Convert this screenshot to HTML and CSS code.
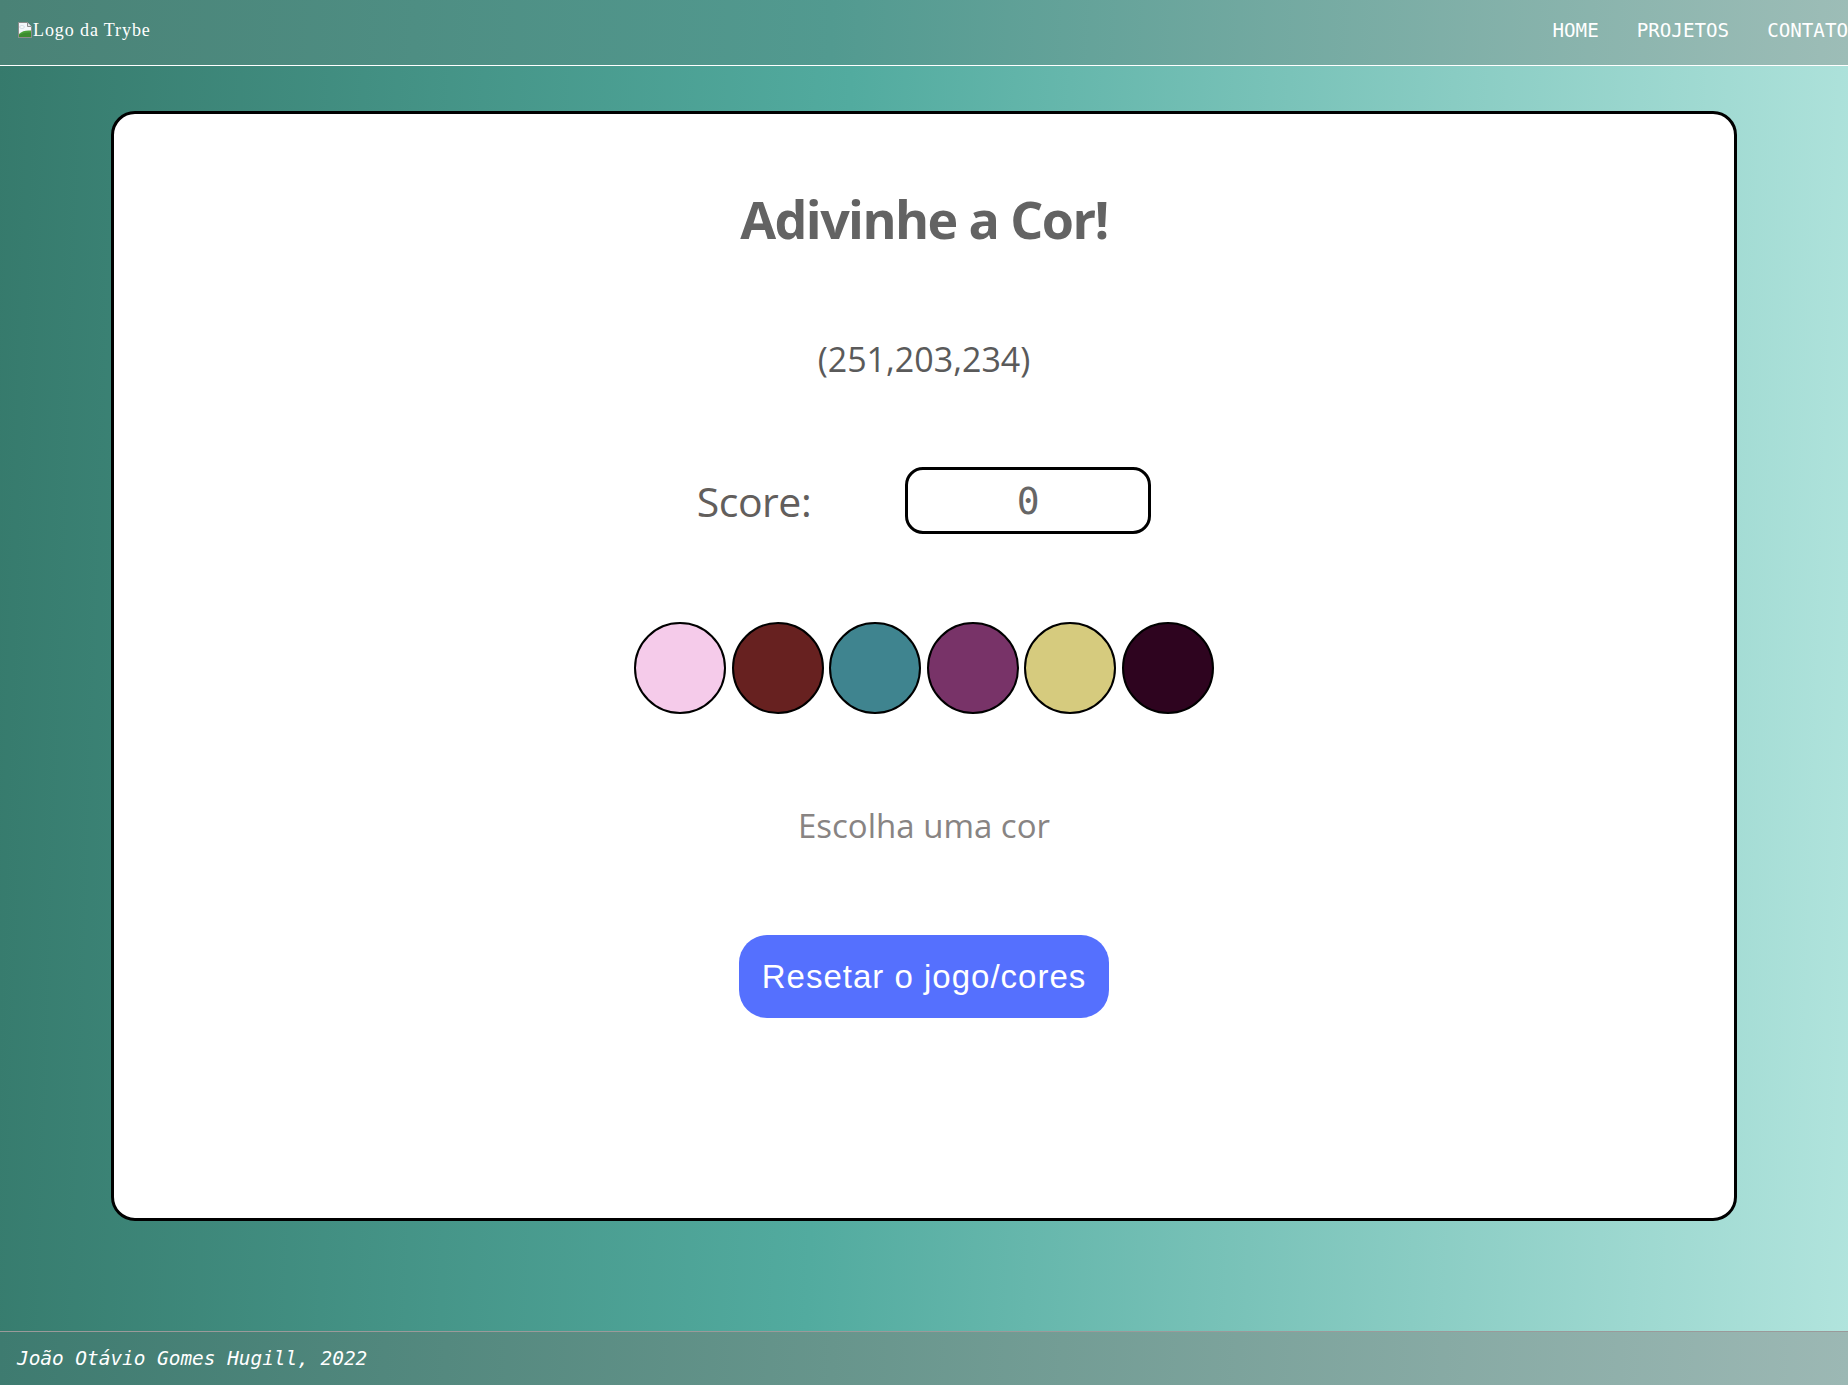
FILE: index.html
```html
<!DOCTYPE html>
<html lang="pt-BR">
<head>
<meta charset="utf-8">
<title>Adivinhe a Cor!</title>
<link rel="stylesheet" href="styles.css">
</head>
<body>
<header class="topbar">
  <div class="logo">
    <svg class="broken-img" width="16" height="16" viewBox="0 0 16 16">
      <path d="M1.5 0.5h9l4 4v11h-13z" fill="#f4f7fb" stroke="#8c8c8c"/>
      <path d="M10.5 0.5v4h4" fill="#dfe4ea" stroke="#8c8c8c"/>
      <ellipse cx="5" cy="5" rx="2.4" ry="1.4" fill="#ffffff" stroke="#b9c7d6" stroke-width="0.6"/>
      <path d="M2 15v-3c3-3 7-4 12-3.5v6.5z" fill="#4aa23a"/>
      <path d="M2 15v-1.6c3-2.3 7-3.2 12-2.8v4.4z" fill="#3d8c2f"/>
    </svg><span class="logo-text">Logo da Trybe</span>
  </div>
  <nav class="nav">
    <a class="nav-link" href="#">HOME</a>
    <a class="nav-link" href="#">PROJETOS</a>
    <a class="nav-link" href="#">CONTATO</a>
  </nav>
</header>
<main class="page">
  <section class="card">
    <h1 class="title">Adivinhe a Cor!</h1>
    <p class="rgb-color">(251,203,234)</p>
    <div class="score-row">
      <span class="score-label">Score:</span>
      <div class="score-box">0</div>
    </div>
    <div class="balls">
      <div class="ball" style="background-color: rgb(245, 203, 234)"></div>
      <div class="ball" style="background-color: rgb(103, 33, 32)"></div>
      <div class="ball" style="background-color: rgb(63, 132, 143)"></div>
      <div class="ball" style="background-color: rgb(120, 51, 104)"></div>
      <div class="ball" style="background-color: rgb(214, 203, 126)"></div>
      <div class="ball" style="background-color: rgb(46, 4, 31)"></div>
    </div>
    <p class="answer">Escolha uma cor</p>
    <button class="reset-btn" type="button">Resetar o jogo/cores</button>
  </section>
</main>
<footer class="footer">
  <span class="footer-text">João Otávio Gomes Hugill, 2022</span>
</footer>
</body>
</html>
```
FILE: styles.css
```css
* { box-sizing: border-box; }

html, body { margin: 0; padding: 0; }

body {
  min-height: 100vh;
  display: flex;
  flex-direction: column;
  background: linear-gradient(92deg, #367a6c 0%, #52ab9f 45%, #b1e4dd 100%);
  font-family: "Open Sans", "Noto Sans", sans-serif;
}

.topbar {
  height: 66px;
  padding: 0 0 5px 17px;
  display: flex;
  align-items: center;
  justify-content: space-between;
  background: linear-gradient(92deg, #4a8276 0%, #529a90 45%, #9dbdb7 100%);
  border-bottom: 1px solid #ffffff;
}

.logo {
  display: flex;
  align-items: center;
  color: #ffffff;
}

.broken-img { display: block; margin-top: -1px; }

.logo-text {
  font-family: "Liberation Serif", "Times New Roman", serif;
  font-size: 18px;
  letter-spacing: 0.9px;
}

.nav {
  display: flex;
  gap: 38px;
}

.nav-link {
  font-family: "DejaVu Sans Mono", monospace;
  font-size: 19.2px;
  color: #ffffff;
  text-decoration: none;
}

.page {
  flex: 1;
  padding-top: 45px;
}

.card {
  width: 1626px;
  height: 1110px;
  margin: 0 auto;
  background: #ffffff;
  border: 3px solid #000000;
  border-radius: 24px;
  display: flex;
  flex-direction: column;
  align-items: center;
  padding-top: 74px;
}

.title {
  margin: 0;
  font-size: 52px;
  line-height: 62px;
  font-weight: 700;
  color: #636363;
  letter-spacing: -1.6px;
}

.rgb-color {
  margin: 89px 0 0;
  font-size: 34px;
  line-height: 40px;
  color: #5a5a5a;
}

.score-row {
  margin-top: 88px;
  display: flex;
  align-items: center;
  gap: 94px;
}

.score-label {
  font-size: 41px;
  color: #625e5c;
  letter-spacing: -0.5px;
}

.score-box {
  width: 246px;
  height: 67px;
  border: 3px solid #000000;
  border-radius: 18px;
  display: flex;
  align-items: center;
  justify-content: center;
  font-family: "DejaVu Sans Mono", monospace;
  font-size: 38px;
  color: #666666;
}

.balls {
  margin-top: 88px;
  display: flex;
  gap: 5.5px;
}

.ball {
  width: 92px;
  height: 92px;
  border-radius: 50%;
  border: 2px solid #000000;
}

.answer {
  margin: 92px 0 0;
  font-size: 33px;
  line-height: 40px;
  color: #888483;
}

.reset-btn {
  margin-top: 89px;
  height: 83px;
  padding: 0 23px;
  border: none;
  border-radius: 28px;
  background: #5570fe;
  color: #ffffff;
  font-family: "Liberation Sans", Arial, sans-serif;
  font-size: 33px;
  letter-spacing: 1px;
}

.footer {
  height: 54px;
  border-top: 1px solid #9a9a9a;
  background: linear-gradient(92deg, #3e7b70 0%, #67958c 45%, #9cb8b4 100%);
  display: flex;
  align-items: center;
  padding-left: 17px;
}

.footer-text {
  font-family: "DejaVu Sans Mono", monospace;
  font-style: italic;
  font-size: 19.4px;
  color: #ffffff;
}
```
